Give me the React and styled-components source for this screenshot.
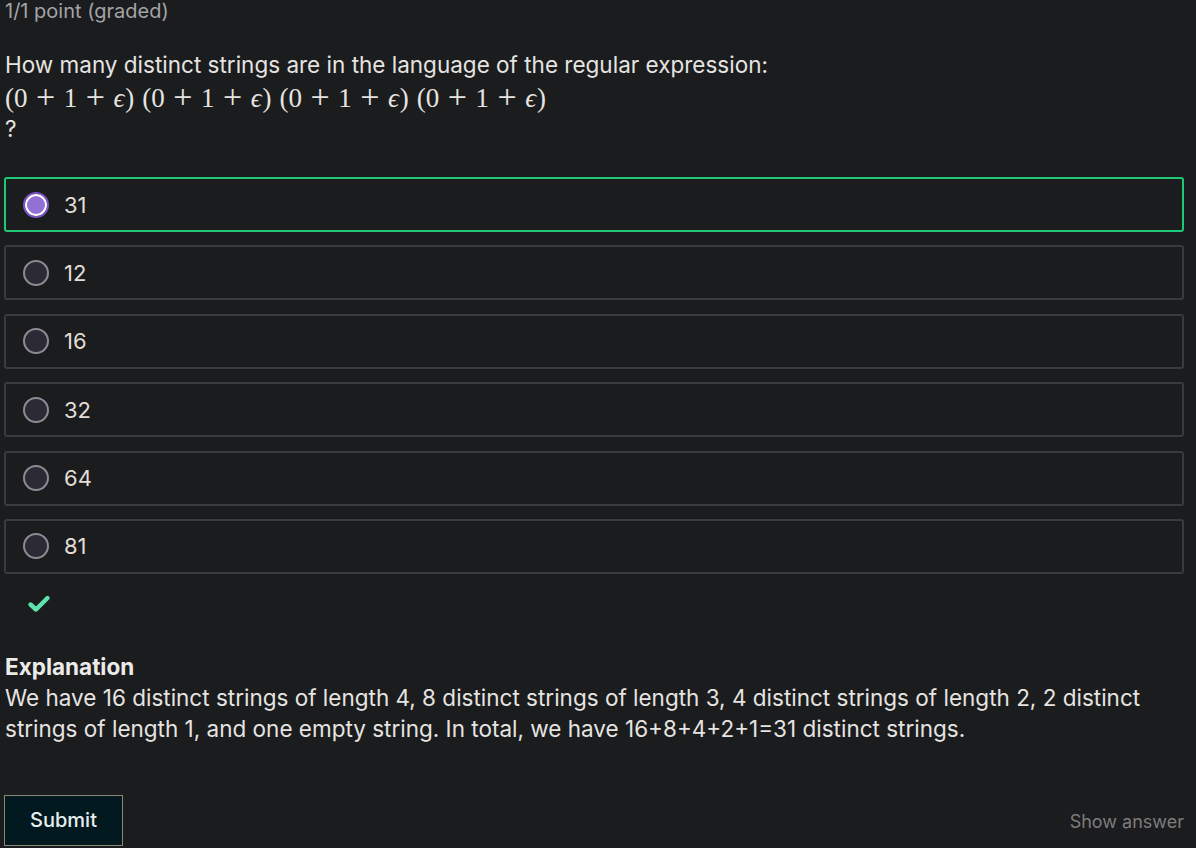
import styled, { createGlobalStyle } from "styled-components";

const GlobalStyle = createGlobalStyle`
  html, body {
    margin: 0;
    padding: 0;
    background-color: #1b1c1e;
  }
  body {
    font-family: Inter, "Noto Sans", sans-serif;
    color: #e6e4e1;
  }
`;

const options = [
  { value: "31", selected: true },
  { value: "12" },
  { value: "16" },
  { value: "32" },
  { value: "64" },
  { value: "81" },
];

function Group() {
  return (
    <MathGroup>
      (0<Op>+</Op>1<Op>+</Op>
      <Eps>ϵ</Eps>)
    </MathGroup>
  );
}

function App() {
  return (
    <Page>
      <GlobalStyle />
      <Points>1/1 point (graded)</Points>
      <Question>
        <p>How many distinct strings are in the language of the regular expression:</p>
        <MathLine>
          <Group />
          <Group />
          <Group />
          <Group />
        </MathLine>
        <p>?</p>
      </Question>
      <Options>
        {options.map((o) => (
          <Option key={o.value} $selected={o.selected}>
            <Radio $selected={o.selected} />
            <OptionLabel>{o.value}</OptionLabel>
          </Option>
        ))}
      </Options>
      <Check>
        <svg width="24" height="20" viewBox="0 0 24 20">
          <path
            d="M3.5 10.5 L9 15.5 L20.5 4"
            fill="none"
            stroke="#5fe3ad"
            strokeWidth="4.4"
            strokeLinecap="round"
            strokeLinejoin="round"
          />
        </svg>
      </Check>
      <Explanation>
        <ExplTitle>Explanation</ExplTitle>
        <p>
          We have 16 distinct strings of length 4, 8 distinct strings of length 3, 4
          distinct strings of length 2, 2 distinct strings of length 1, and one empty
          string. In total, we have 16+8+4+2+1=31 distinct strings.
        </p>
      </Explanation>
      <Footer>
        <SubmitBtn>Submit</SubmitBtn>
        <ShowAnswer>Show answer</ShowAnswer>
      </Footer>
    </Page>
  );
}

const Page = styled.div`
  display: flex;
  flex-direction: column;
  padding: 0 12px 0 4px;
  width: 1196px;
  height: 848px;
  box-sizing: border-box;
  overflow: hidden;
`;
const Points = styled.div`
  font-size: 20px;
  line-height: 22px;
  color: #a3a4a6;
  padding-left: 1px;
`;
const Question = styled.div`
  margin-top: 27px;
  font-size: 22.5px;
  line-height: 32px;
  padding-left: 1px;
  p {
    margin: 0;
  }
`;
const MathLine = styled.div`
  display: flex;
  gap: 8px;
  height: 32px;
  align-items: center;
`;
const MathGroup = styled.span`
  font-family: "Liberation Serif", serif;
  font-size: 27px;
  line-height: 32px;
  display: inline-flex;
  align-items: baseline;
`;
const Op = styled.span`
  font-size: 34px;
  font-weight: 300;
  line-height: 32px;
  margin: 0 8.5px;
  position: relative;
  top: 1px;
`;
const Eps = styled.span`
  font-style: italic;
  margin-right: 1px;
`;
const Options = styled.div`
  margin-top: 32px;
  display: flex;
  flex-direction: column;
  gap: 13.4px;
`;
const Option = styled.div`
  display: flex;
  align-items: center;
  gap: 15px;
  height: 55px;
  box-sizing: border-box;
  padding-left: 17px;
  border: 2px solid ${({ $selected }) => ($selected ? "#1fc877" : "#3a3b3e")};
  border-radius: 3px;
`;
const Radio = styled.span`
  width: 26px;
  height: 26px;
  box-sizing: border-box;
  border-radius: 50%;
  ${({ $selected }) =>
    $selected
      ? `
    background-color: #9370d3;
    border: 2px solid #7a54c0;
    box-shadow: inset 0 0 0 2px #ffffff;
  `
      : `
    background-color: #2c2b35;
    border: 2px solid #8c8b93;
  `}
`;
const OptionLabel = styled.span`
  font-size: 22px;
  color: #e2ddd6;
`;
const Check = styled.div`
  margin: 20px 0 0 23px;
  height: 22px;
`;
const Explanation = styled.div`
  margin-top: 35px;
  font-size: 22.5px;
  line-height: 31px;
  padding-left: 1px;
  p {
    margin: 0;
  }
`;
const ExplTitle = styled.div`
  font-weight: 700;
  color: #ecebe8;
`;
const Footer = styled.div`
  margin-top: 51px;
  display: flex;
  align-items: center;
  justify-content: space-between;
`;
const SubmitBtn = styled.button`
  width: 119px;
  height: 51px;
  background-color: #01191f;
  border: 1px solid #8c8474;
  color: #e8eef0;
  font-family: Inter, sans-serif;
  font-size: 20px;
  font-weight: 500;
  padding: 0;
`;
const ShowAnswer = styled.span`
  font-size: 18px;
  color: #7c7c7c;
  margin-top: 3px;
`;

export default App;
